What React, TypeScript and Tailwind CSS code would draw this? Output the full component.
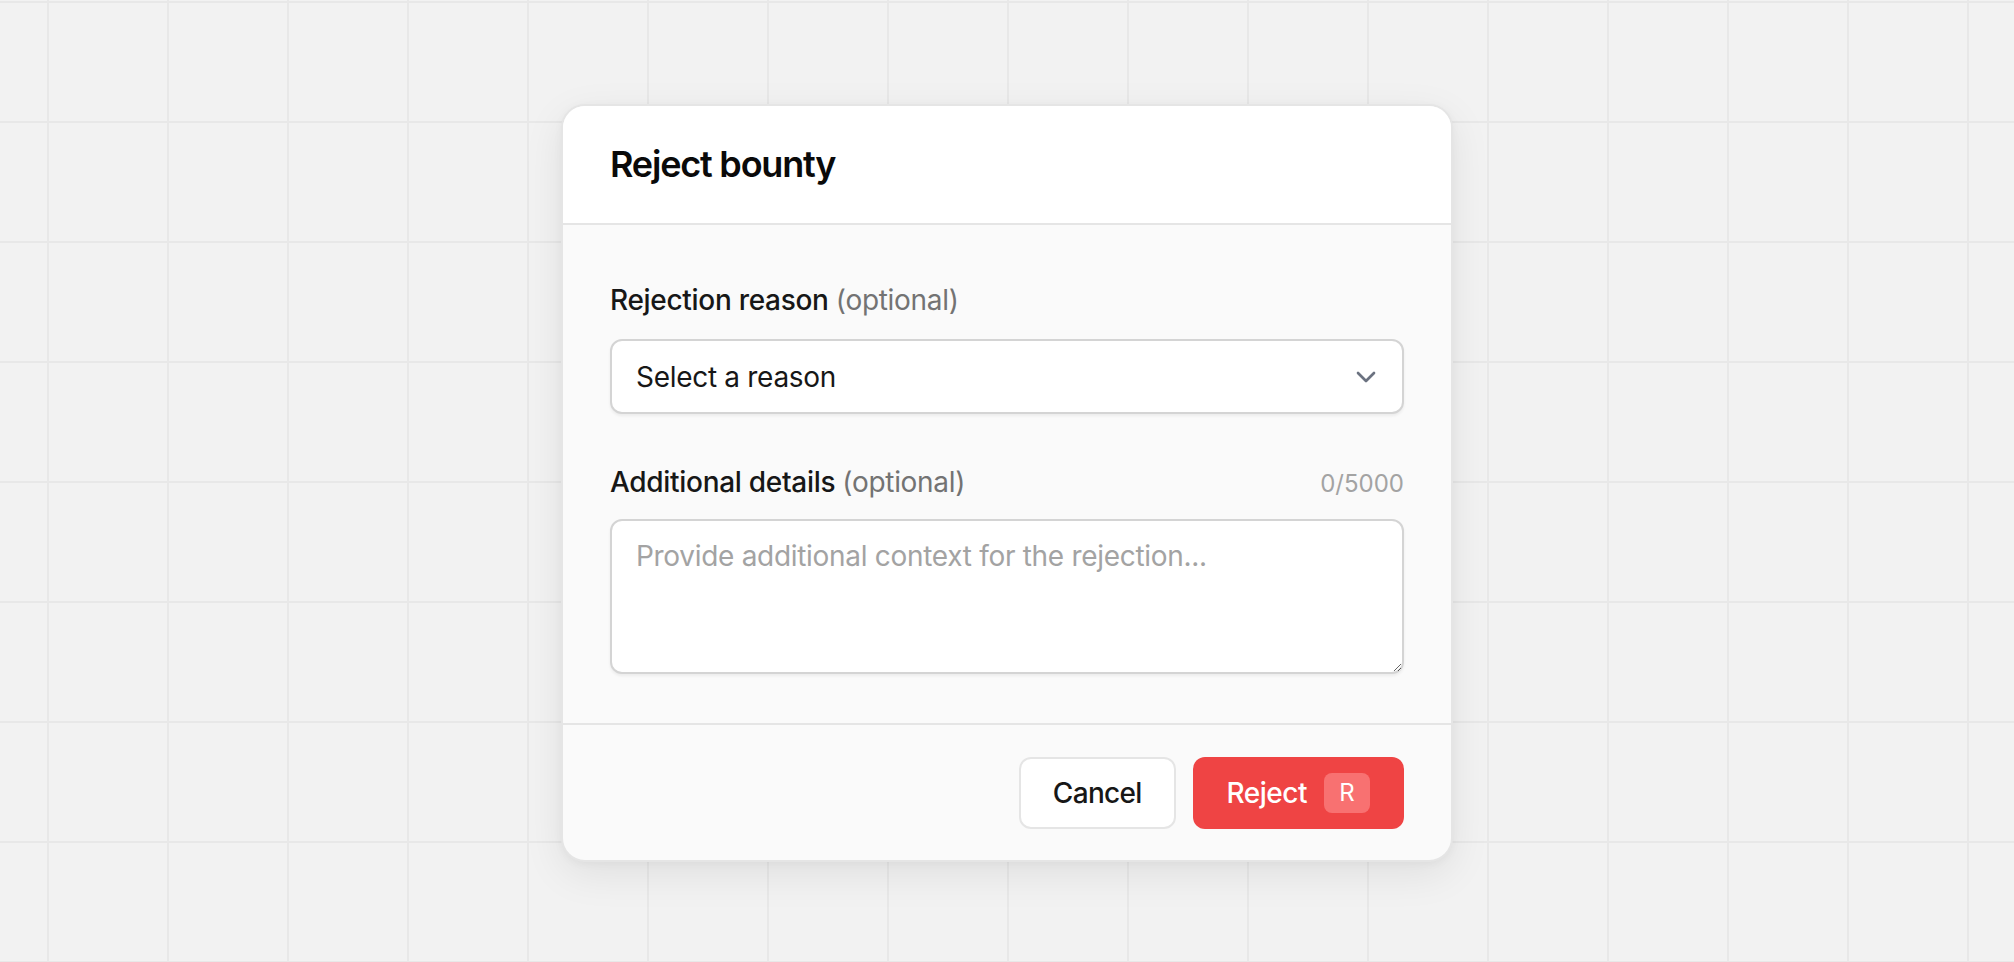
import { ChevronDown } from 'lucide-react'
import { useState } from 'react'

const MAX_DETAILS = 5000

export default function App() {
  const [details, setDetails] = useState('')

  return (
    <div className="h-[962px] w-full overflow-hidden bg-[#f2f2f2] bg-[linear-gradient(to_right,#e8e8e8_2px,transparent_2px),linear-gradient(to_bottom,#e8e8e8_2px,transparent_2px)] bg-[size:120px_120px] bg-[position:47px_1px] pt-[104px] font-['Inter','Liberation_Sans',sans-serif] tracking-[-0.3px]">
      <div className="mx-auto flex w-[892px] flex-col overflow-hidden rounded-[24px] border-2 border-[#e5e5e5] bg-[#fafafa] shadow-[0_12px_40px_rgba(0,0,0,0.08),0_2px_8px_rgba(0,0,0,0.04)]">
        <div className="border-b-2 border-[#e5e5e5] bg-white px-[47px] pt-[30px] pb-[31px]">
          <h1 className="text-[36px] leading-[56px] font-semibold tracking-[-1.2px] text-[#0a0a0a]">
            Reject bounty
          </h1>
        </div>

        <div className="px-[47px] pt-[55px] pb-[49px]">
          <label className="mb-[19px] block text-[28px] leading-[40px] font-medium text-[#171717]">
            Rejection reason <span className="font-normal text-[#737373]">(optional)</span>
          </label>
          <button
            type="button"
            className="flex h-[75px] w-full items-center justify-between rounded-[12px] border-2 border-[#d4d4d4] bg-white pr-[20px] pl-[24px] text-left text-[28px] leading-[40px] text-[#171717] shadow-[0_2px_3px_rgba(0,0,0,0.06)]"
          >
            <span>Select a reason</span>
            <ChevronDown size={32} strokeWidth={2} className="text-[#6b7280]" />
          </button>

          <div className="mt-[48px] mb-[17px] flex items-baseline justify-between">
            <label
              htmlFor="details"
              className="block text-[28px] leading-[40px] font-medium text-[#171717]"
            >
              Additional details <span className="font-normal text-[#737373]">(optional)</span>
            </label>
            <span className="text-[24px] leading-[32px] tracking-normal text-[#a3a3a3]">
              {details.length}/{MAX_DETAILS}
            </span>
          </div>
          <textarea
            id="details"
            value={details}
            maxLength={MAX_DETAILS}
            onChange={(e) => setDetails(e.target.value)}
            placeholder="Provide additional context for the rejection..."
            className="block h-[155px] w-full resize-y rounded-[12px] border-2 border-[#d4d4d4] bg-white px-[24px] pt-[15px] text-[28px] leading-[40px] text-[#171717] shadow-[0_2px_3px_rgba(0,0,0,0.06)] outline-none placeholder:text-[#a3a3a3]"
          />
        </div>

        <div className="flex justify-end gap-[17px] border-t-2 border-[#e5e5e5] px-[47px] pt-[32px] pb-[31px]">
          <button
            type="button"
            className="h-[72px] rounded-[12px] border-2 border-[#e5e5e5] bg-white px-[32px] text-[28px] font-medium tracking-[-0.7px] text-[#171717]"
          >
            Cancel
          </button>
          <button
            type="button"
            className="flex h-[72px] items-center gap-[17px] rounded-[12px] border-2 border-transparent bg-[#ef4444] px-[32px] text-[28px] font-medium tracking-[-0.5px] text-white"
          >
            Reject
            <kbd className="flex h-[40px] w-[46px] items-center justify-center rounded-[8px] bg-[#f87171] font-['Inter','Liberation_Sans',sans-serif] text-[24px] font-normal tracking-normal">
              R
            </kbd>
          </button>
        </div>
      </div>
    </div>
  )
}
